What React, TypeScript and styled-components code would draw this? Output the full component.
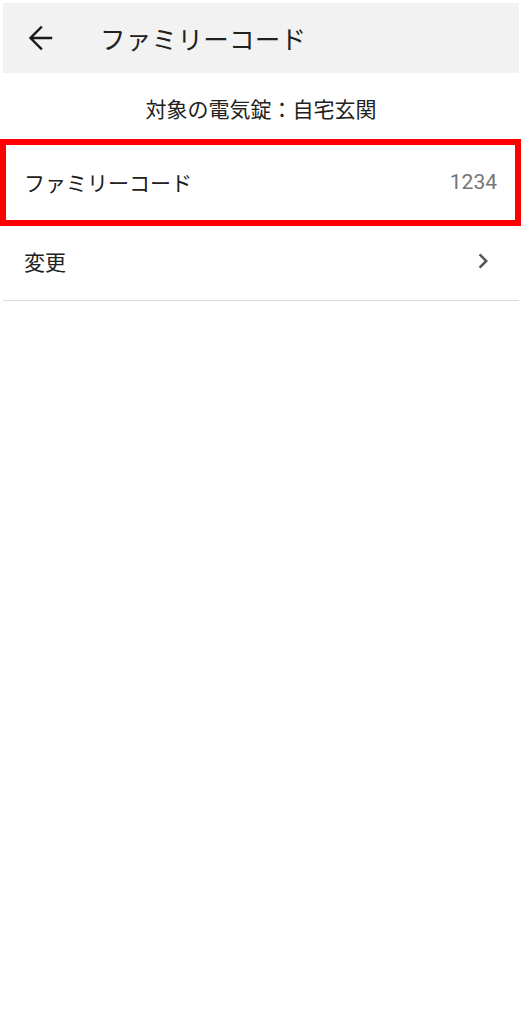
import React from "react";
import styled, { createGlobalStyle } from "styled-components";

const GlobalStyle = createGlobalStyle`
  html, body {
    margin: 0;
    padding: 0;
    background: #ffffff;
  }
  body {
    font-family: "Noto Sans CJK JP", "Noto Sans", Roboto, sans-serif;
    color: #212121;
  }
`;

const Page = styled.div`
  padding: 3px 3px 0 3px;
  display: flex;
  flex-direction: column;
  min-height: 1022px;
`;

const Header = styled.header`
  height: 70px;
  background: #f2f2f2;
  display: flex;
  align-items: center;
  padding-left: 24px;
  box-sizing: border-box;
`;

const BackButton = styled.button`
  border: none;
  background: transparent;
  padding: 0;
  width: 28px;
  height: 28px;
  display: flex;
  align-items: center;
  justify-content: center;
  color: #1a1a1a;
  cursor: pointer;
`;

const Title = styled.h1`
  margin: 0 0 0 45px;
  font-size: 25.5px;
  line-height: 1;
  font-weight: 400;
  color: #212121;
  letter-spacing: 0.3px;
`;

const Subtitle = styled.div`
  height: 70px;
  display: flex;
  align-items: center;
  justify-content: center;
  font-size: 21px;
  line-height: 1;
  color: #212121;
`;

const Row = styled.div`
  position: relative;
  height: 79px;
  box-sizing: border-box;
  border-bottom: 1px solid #dcdcdc;
  display: flex;
  align-items: center;
  justify-content: space-between;
  padding: 0 22px 0 21px;
`;

const Highlight = styled.div`
  position: absolute;
  top: -4px;
  left: -3px;
  right: -2px;
  bottom: -5px;
  border: 6px solid #ff0000;
  pointer-events: none;
`;

const Label = styled.span`
  font-size: 21px;
  line-height: 1;
  color: #212121;
`;

const Value = styled.span`
  font-family: Roboto, "Noto Sans", sans-serif;
  font-size: 21px;
  line-height: 1;
  color: #757575;
`;

const Chevron = styled.span`
  display: flex;
  margin-right: -1px;
  color: #555555;
`;

export default function App() {
  return (
    <>
      <GlobalStyle />
      <Page>
        <Header>
          <BackButton aria-label="戻る">
            <svg width="26" height="26" viewBox="0 0 26 26" fill="none">
              <path
                d="M23 13H3M13 2.5L2.5 13L13 23.5"
                stroke="currentColor"
                strokeWidth="2.4"
                strokeLinecap="square"
              />
            </svg>
          </BackButton>
          <Title>ファミリーコード</Title>
        </Header>
        <Subtitle>対象の電気錠：自宅玄関</Subtitle>
        <Row>
          <Label>ファミリーコード</Label>
          <Value>1234</Value>
          <Highlight />
        </Row>
        <Row>
          <Label>変更</Label>
          <Chevron>
            <svg width="30" height="30" viewBox="0 0 24 24">
              <path
                d="M8.59 16.59L13.17 12 8.59 7.41 10 6l6 6-6 6-1.41-1.41z"
                fill="currentColor"
              />
            </svg>
          </Chevron>
        </Row>
      </Page>
    </>
  );
}
